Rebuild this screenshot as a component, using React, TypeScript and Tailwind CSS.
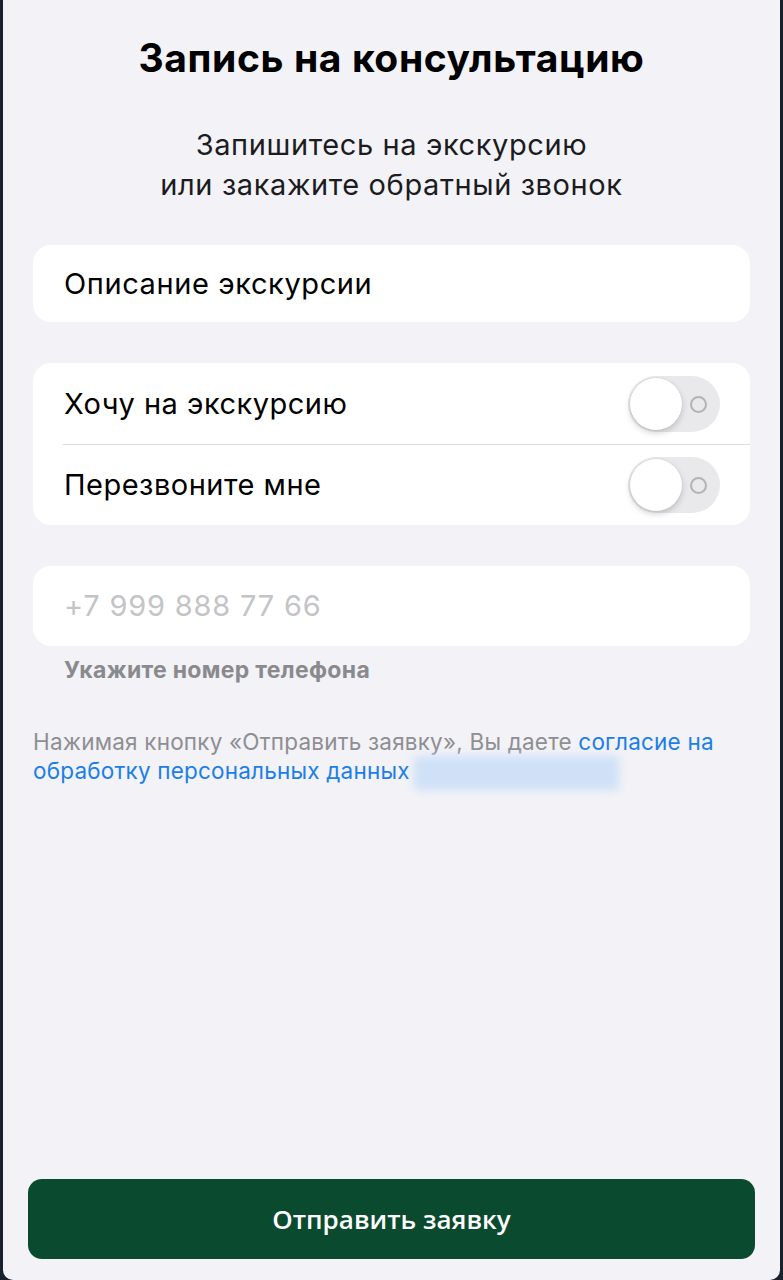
import React from "react";

function Toggle() {
  return (
    <div className="relative w-[92px] h-[56px] rounded-full bg-[#e9e9eb] shrink-0">
      <div className="absolute left-[2px] top-[2px] w-[52px] h-[52px] rounded-full bg-white shadow-[0_3px_6px_rgba(0,0,0,0.18),0_0_0_0.5px_rgba(0,0,0,0.06)]" />
      <div className="absolute right-[13px] top-[20px] w-[17px] h-[17px] rounded-full border-[2px] border-[#b3b3b5]" />
    </div>
  );
}

export default function App() {
  return (
    <div className="w-[783px] h-[1280px] bg-[#18212c] flex flex-col" style={{ fontFamily: 'Inter, "Liberation Sans", Arial, sans-serif' }}>
      <div className="mx-[3px] flex-1 bg-[#f2f2f7] flex flex-col px-[30px] rounded-b-[10px]">
        <h1 className="text-center text-[39px] font-bold text-black leading-[44px] mt-[36px] tracking-[0.6px]">Запись на консультацию</h1>
        <p className="text-center text-[29px] leading-[40px] text-[#1c1c1e] mt-[45px] tracking-[0.6px]">
          Запишитесь на экскурсию<br />или закажите обратный звонок
        </p>
        <div className="mt-[40px] h-[77px] bg-white rounded-[18px] flex items-center px-[31px] text-[29px] tracking-[0.6px] text-black">Описание экскурсии</div>
        <div className="mt-[41px] bg-white rounded-[18px] flex flex-col">
          <div className="h-[81px] flex items-center justify-between pl-[31px] pr-[30px] text-[29px] tracking-[0.5px] text-black">
            <span>Хочу на экскурсию</span>
            <Toggle />
          </div>
          <div className="ml-[30px] h-[1px] bg-[#dcdcde]" />
          <div className="h-[80px] flex items-center justify-between pl-[31px] pr-[30px] text-[29px] tracking-[0.5px] text-black">
            <span>Перезвоните мне</span>
            <Toggle />
          </div>
        </div>
        <div className="mt-[41px] h-[80px] bg-white rounded-[18px] flex items-center px-[31px] text-[29px] tracking-[0.8px] text-[#c4c4c7]">+7 999 888 77 66</div>
        <div className="mt-[9px] pl-[31px] text-[23px] font-bold text-[#8a8a8e] leading-[30px] tracking-[0.3px]">Укажите номер телефона</div>
        <p className="mt-[42px] text-[22.5px] leading-[29px] text-[#8e8e93] tracking-[0.2px]">
          Нажимая кнопку «Отправить заявку», Вы даете <span className="text-[#1b7ee9]">согласие на обработку персональных данных</span>
          <span className="inline-block align-middle ml-[4px] w-[205px] h-[34px] bg-[#cfe1f7] blur-[4px] rounded-[4px]"></span>
        </p>
        <div className="flex-1" />
        <button className="mb-[21px] -mx-[5px] h-[80px] rounded-[14px] bg-[#0a4a2e] text-white text-[26px] font-semibold" style={{ fontFamily: '"Open Sans", sans-serif' }}>
          Отправить заявку
        </button>
      </div>
    </div>
  );
}
